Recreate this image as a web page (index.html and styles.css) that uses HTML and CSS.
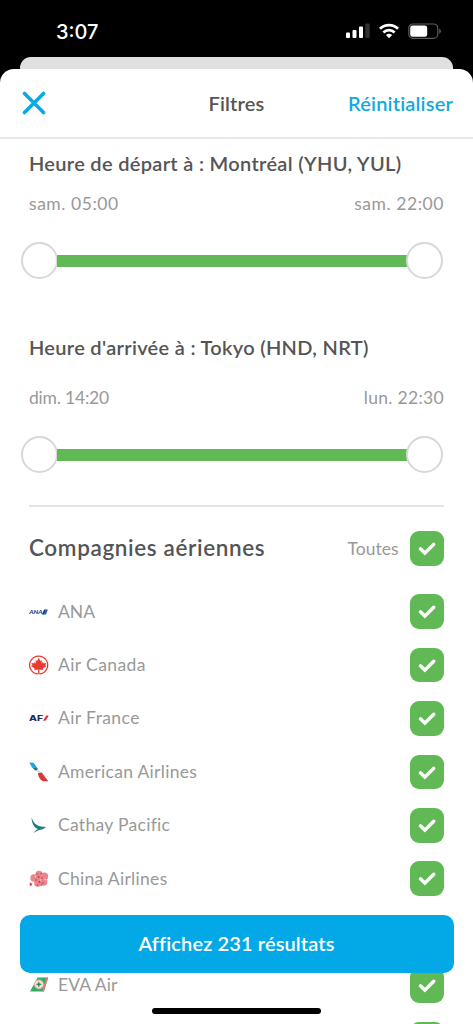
FILE: index.html
```
<!DOCTYPE html>
<html lang="fr">
<head>
<meta charset="utf-8">
<meta name="viewport" content="width=device-width, initial-scale=1">
<title>Filtres</title>
<link rel="stylesheet" href="styles.css">
</head>
<body>
<svg class="defs" width="0" height="0" aria-hidden="true">
  <symbol id="check" viewBox="0 0 34 34"><path d="M10.3 17.6l4.3 4.2 8.8-8.7" fill="none" stroke="#fff" stroke-width="3.4" stroke-linecap="round" stroke-linejoin="miter"/></symbol>
</svg>
<div class="phone">
  <div class="status">
    <span class="clock">3:07</span>
    <div class="status-icons">
      <svg width="24" height="16" viewBox="0 0 24 16"><g fill="#fff"><rect y="9.5" width="4" height="5.5" rx="1"/><rect x="6.5" y="7" width="4" height="8" rx="1"/><rect x="13" y="3.5" width="4" height="11.5" rx="1"/></g><rect x="19.3" y="0.5" width="4.4" height="14.5" rx="1" fill="#303030"/></svg>
      <svg width="20" height="16" viewBox="0 0 20 16"><g fill="none" stroke="#fff" stroke-width="2.8"><path d="M1 5.8a13 13 0 0 1 18 0"/><path d="M4.4 9.4a8.1 8.1 0 0 1 11.2 0"/></g><path d="M6.9 12a4.7 4.7 0 0 1 6.2 0L10 15.3z" fill="#fff"/></svg>
      <svg width="34" height="17" viewBox="0 0 34 17"><rect x=".8" y="1" width="29" height="14.4" rx="4.2" fill="none" stroke="#5c5c5c" stroke-width="1.2"/><rect x="2.2" y="2.6" width="17" height="11.2" rx="2.4" fill="#fff"/><path d="M31.3 5.8c2 .8 2 4 0 4.8z" fill="#666"/></svg>
    </div>
  </div>
  <div class="back-sheet"></div>
  <main class="sheet">
    <header class="header">
      <svg class="close" width="24" height="24" viewBox="0 0 24 24"><path d="M2.5 2.5l19 19M21.5 2.5l-19 19" stroke="#07a9e6" stroke-width="3.6" stroke-linecap="round"/></svg>
      <h1 class="title">Filtres</h1>
      <span class="reset">Réinitialiser</span>
    </header>
    <section class="range departure">
      <h2 class="range-title">Heure de départ à : Montréal (YHU, YUL)</h2>
      <div class="times"><span class="t-sam">sam. 05:00</span><span class="t-sam">sam. 22:00</span></div>
      <div class="slider"><i class="knob"></i><i class="track"></i><i class="knob"></i></div>
    </section>
    <section class="range arrival">
      <h2 class="range-title">Heure d'arrivée à : Tokyo (HND, NRT)</h2>
      <div class="times"><span class="t-dim">dim. 14:20</span><span class="t-lun">lun. 22:30</span></div>
      <div class="slider"><i class="knob"></i><i class="track"></i><i class="knob"></i></div>
    </section>
    <section class="airlines">
      <div class="all"><h2 class="all-title">Compagnies aériennes</h2><span class="all-label">Toutes</span><svg class="box"><use href="#check"/></svg></div>
      <div class="row">
        <svg class="logo" viewBox="0 0 20 20"><text x=".3" y="12.3" class="ana" textLength="13.4" lengthAdjust="spacingAndGlyphs">ANA</text><path d="M15.2 7.6h1.9l-2 4.9h-2.2z" fill="#16357f"/><path d="M16.8 7.6h2.1l-1.9 4.9h-2.2z" fill="#2460ad"/></svg>
        <span class="name n-ana">ANA</span><svg class="box"><use href="#check"/></svg>
      </div>
      <div class="row">
        <svg class="logo" viewBox="0 0 20 20"><path d="M8.7 19A9 9 0 1 1 10.6 19" fill="none" stroke="#e8392e" stroke-width="1.3"/><path d="M9.7 3.3l1.6 3 1.4-.7-.4 3.3 1.6-1.5.5 1.1 2.5-.3-.9 2 1 .7-3.3 2.6.4 1.3-3.9-.5.1 4.6h-1l.1-4.6-3.9.5.4-1.3-3.4-2.6 1.1-.7-.9-2 2.5.3.5-1.1 1.6 1.5-.5-3.3 1.4.7z" fill="#e8392e" stroke="#e8392e" stroke-width=".5"/></svg>
        <span class="name n-ac">Air Canada</span><svg class="box"><use href="#check"/></svg>
      </div>
      <div class="row">
        <svg class="logo" viewBox="0 0 20 20"><text x="0" y="12.8" class="af" textLength="14" lengthAdjust="spacingAndGlyphs">AF</text><path d="M17.4 7.5h2.3l-3.2 5.3h-2.5z" fill="#e5272f"/></svg>
        <span class="name n-af">Air France</span><svg class="box"><use href="#check"/></svg>
      </div>
      <div class="row">
        <svg class="logo" viewBox="0 0 20 20"><path d="M.4.6h3c2 .4 3.2 3 5.3 6.2L6.2 8.3C3.5 6.8 1.7 3.8.4.6z" fill="#21a5df"/><path d="M4.2 6.2l3.8-.4 1.4 2.5-2.6.4z" fill="#2b6e95"/><path d="M8.7 6.8l3.6 3.7-2.6.7-2.4-2.4z" fill="#d9e0e3"/><path d="M8.9 11.2l3.8-.7 6.6 8.7h-4.8C11.6 18.7 9.4 15 8.9 11.2z" fill="#d53a3b"/></svg>
        <span class="name n-aa">American Airlines</span><svg class="box"><use href="#check"/></svg>
      </div>
      <div class="row">
        <svg class="logo" viewBox="0 0 20 20"><path d="M2.7 2.3c.8 3.9 3.5 7.6 7.8 9 2.4.5 4.5.4 6.6.6-1.7.8-2.6 2.3-4.6 2.5-2.7.4-5.1 1.5-7.8 3.6 1-1.9 2.5-3 4.3-3.7C4.4 12.3 2.4 7 2.7 2.3z" fill="#217c80"/></svg>
        <span class="name n-cp">Cathay Pacific</span><svg class="box"><use href="#check"/></svg>
      </div>
      <div class="row">
        <svg class="logo" viewBox="0 0 20 20"><g fill="#e9868d"><circle cx="10" cy="5.3" r="3.5"/><circle cx="15.4" cy="7.4" r="3.8"/><circle cx="14.7" cy="13" r="3.7"/><circle cx="8.8" cy="14" r="3.8"/><circle cx="5" cy="9" r="3.7"/><circle cx="10.5" cy="10" r="4"/><path d="M.8 13l2.6 1.6L2 17.6.5 16z"/></g><g fill="#cf3140"><circle cx="8" cy="5" r=".7"/><circle cx="12" cy="4.5" r=".7"/><circle cx="9.6" cy="8" r=".9"/><circle cx="13" cy="9" r=".8"/><circle cx="7" cy="11" r=".8"/><circle cx="10.5" cy="13" r=".9"/><circle cx="14" cy="14" r=".8"/><circle cx="8.4" cy="16" r=".7"/><circle cx="12.5" cy="16" r=".7"/><circle cx="1.8" cy="15.6" r="1"/></g><g fill="#f8d7d9"><circle cx="6.6" cy="7.2" r=".7"/><circle cx="11.5" cy="11" r=".7"/><circle cx="16.2" cy="10.5" r=".8"/><circle cx="5.3" cy="14.5" r=".7"/></g></svg>
        <span class="name n-ci">China Airlines</span><svg class="box"><use href="#check"/></svg>
      </div>
      <div class="row"></div>
      <div class="row">
        <svg class="logo" viewBox="0 0 20 20"><path d="M8.6 2.4h10.6l-4.3 14H1z" fill="#31ad68"/><path d="M17.5 2.4h1.7l-4.3 14h-1.8z" fill="#ed7774"/><circle cx="10" cy="9.4" r="4.5" fill="#f3ded5" stroke="#eca69a" stroke-width=".9"/><path d="M9.8 6.5l.9 2 2.2.8-2.2.9-.9 2.2-.9-2.2-2-.9 2-.8z" fill="#238e58"/></svg>
        <span class="name n-eva">EVA Air</span><svg class="box"><use href="#check"/></svg>
      </div>
      <div class="row"><svg class="box last"><use href="#check"/></svg></div>
    </section>
  </main>
  <div class="button">Affichez 231 résultats</div>
  <div class="home"></div>
</div>
</body>
</html>
```
FILE: styles.css
```
* { box-sizing: border-box; }
html, body { margin: 0; background: #000; overflow: hidden; }
body { font-family: Lato, "Open Sans", sans-serif; font-variant-ligatures: none; }
h1, h2 { margin: 0; font-weight: 600; white-space: nowrap; }
svg { display: block; flex: none; }
.defs { position: absolute; }
.phone { position: relative; width: 473px; height: 1024px; overflow: hidden; background: #000; display: flex; flex-direction: column; }
.status { height: 57px; flex: none; display: flex; justify-content: space-between; align-items: flex-start; padding: 20px 31px 0 56px; }
.clock { font: 500 20px/24px Inter, sans-serif; color: #fff; }
.status-icons { display: flex; gap: 9px; padding-top: 3px; }
.back-sheet { height: 12px; flex: none; margin: 0 20px; border-radius: 11px 11px 0 0; background: #e0e0e0; }
.sheet { flex: 1; min-height: 0; overflow: hidden; background: #fff; border-radius: 14px 14px 0 0; }
.header { height: 70px; display: grid; grid-template-columns: 1fr auto 1fr; align-items: center; padding: 0 20px 0 22px; border-bottom: 2px solid #e8e8e8; line-height: 24px; font-size: 20px; }
.title { font-size: 20px; color: #555; letter-spacing: .15px; margin-right: 2px; }
.reset { justify-self: end; font-weight: 600; color: #12a9e3; letter-spacing: .18px; }
.range { padding: 0 29px; }
.departure { height: 197px; padding-top: 12px; }
.arrival { height: 169px; margin-top: -1px; }
.range-title { font-size: 20px; line-height: 24px; color: #555; letter-spacing: .31px; }
.times { display: flex; justify-content: space-between; margin-top: 17px; font-size: 17.5px; line-height: 24px; color: #999; white-space: nowrap; }
.t-sam { letter-spacing: .55px; }
.t-dim { letter-spacing: -.2px; }
.t-lun { letter-spacing: .3px; }
.arrival .times { margin-top: 27px; }
.slider { display: flex; align-items: center; margin: 26px 1.5px 0 -8.5px; }
.knob { width: 37px; height: 37px; flex: none; border: 2px solid #d8d8d8; border-radius: 50%; background: #fff; }
.track { flex: 1; height: 12px; margin: 0 -1px; background: #61b955; }
.airlines { margin: 1px 29px 0; border-top: 2px solid #e4e4e4; }
.all { height: 78px; padding-top: 4.5px; display: flex; align-items: center; }
.all-title { flex: 1; font-size: 22.5px; line-height: 28px; color: #555; letter-spacing: .63px; padding-bottom: 1px; }
.all-label { font-size: 17.5px; color: #999; margin-right: 11px; }
.row { height: 53.4px; display: flex; align-items: center; }
.logo { width: 20px; height: 20px; }
.name { flex: 1; padding: 0 0 1px 9px; font-size: 17.5px; color: #999; white-space: nowrap; letter-spacing: .3px; }
.n-ana { letter-spacing: 0; }
.n-ac, .n-af { letter-spacing: .4px; }
.n-eva { letter-spacing: .15px; }
.box { width: 34.5px; height: 34.5px; border-radius: 9px; background: #61b955; }
.last { margin-left: auto; }
.ana { font: italic 900 5.8px Lato, sans-serif; fill: #243f78; }
.af { font: 800 7.2px Inter, sans-serif; fill: #202c62; }
.button { position: absolute; left: 19.5px; right: 19.5px; top: 914.5px; height: 58.5px; border-radius: 10px; background: #03a9e7; color: #fff; font-size: 20px; font-weight: 600; line-height: 56.5px; text-align: center; letter-spacing: .12px; }
.home { position: absolute; left: 152px; top: 1008px; width: 169px; height: 6px; border-radius: 3px; background: #000; }
```
